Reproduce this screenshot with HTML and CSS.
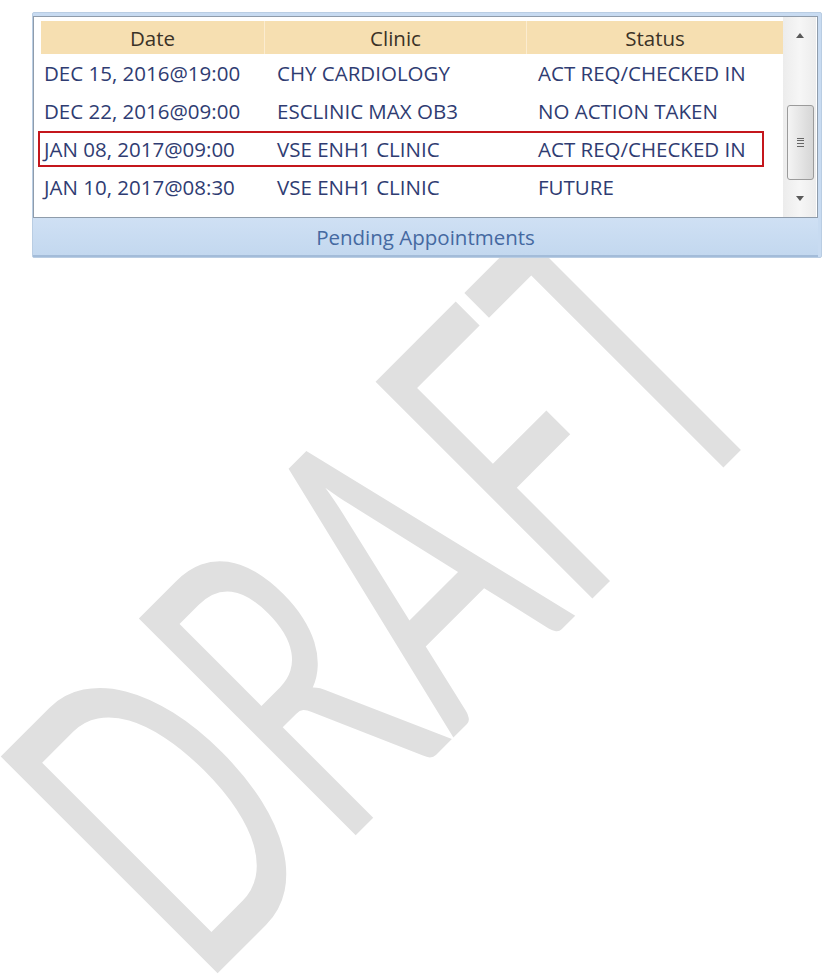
FILE: index.html
```html
<!DOCTYPE html>
<html lang="en">
<head>
  <meta charset="UTF-8" />
  <title>Pending Appointments</title>
  <link rel="stylesheet" href="styles.css">
</head>
<body>
  <div class="watermark">DRAFT</div>

  <section class="panel">
    <div class="grid-box">
      <div class="grid">
        <div class="row head">
          <div>Date</div>
          <div>Clinic</div>
          <div>Status</div>
        </div>
        <div class="row">
          <div>DEC 15, 2016@19:00</div>
          <div>CHY CARDIOLOGY</div>
          <div>ACT REQ/CHECKED IN</div>
        </div>
        <div class="row">
          <div>DEC 22, 2016@09:00</div>
          <div>ESCLINIC MAX OB3</div>
          <div>NO ACTION TAKEN</div>
        </div>
        <div class="row flagged">
          <div>JAN 08, 2017@09:00</div>
          <div>VSE ENH1 CLINIC</div>
          <div>ACT REQ/CHECKED IN</div>
        </div>
        <div class="row">
          <div>JAN 10, 2017@08:30</div>
          <div>VSE ENH1 CLINIC</div>
          <div>FUTURE</div>
        </div>
      </div>

      <!-- vertical scrollbar -->
      <div class="scrollbar">
        <span class="arrow up"></span>
        <div class="track">
          <div class="thumb"><span class="grip"></span></div>
        </div>
        <span class="arrow down"></span>
      </div>
    </div>
    <div class="panel-title">Pending Appointments</div>
  </section>
</body>
</html>
```

FILE: styles.css
```css
* { margin: 0; padding: 0; box-sizing: border-box; }
html, body {
  background: #fff;
  font-family: 'Open Sans', 'Noto Sans', sans-serif;
  overflow: hidden;
  height: 100%;
}

body {
  position: relative;
  padding-top: 12px;
}

/* watermark sits behind the panel, narrow letters on a 45deg baseline */
.watermark {
  position: absolute;
  left: -67px;
  top: 722px;
  transform-origin: 0 0;
  transform: rotate(-45deg) scaleX(0.6);
  font-family: 'Lato', sans-serif;
  font-weight: 400;
  font-size: 428px;
  line-height: 1;
  color: #e0e0e0;
  white-space: nowrap;
  z-index: 0;
}

.panel {
  position: relative;
  z-index: 1;
  width: 790px;
  margin-left: 32px;
  border: 1px solid #b9cde3;
  border-radius: 2px;
  background: #c8dbf1;
  padding: 3px 3px 0 0;
}

.grid-box {
  display: flex;
  height: 202px;
  background: #fff;
  border: 1px solid #8f9cab;
  padding: 4px 0 0 7px;
}

.grid {
  position: relative;
  width: 742px;
}

.row {
  position: relative;
  display: grid;
  grid-template-columns: 223px 262px 257px;
  height: 38px;
  align-items: center;
  font-size: 20.5px;
  color: #2f3c72;
}

.row div {
  padding-left: 3px;
  white-space: nowrap;
}

.row div:nth-child(2) { padding-left: 13px; }
.row div:nth-child(3) { padding-left: 12px; }

.row.head {
  height: 33px;
  background: #f6dfb1;
  color: #3b3227;
}

.row.head div {
  height: 100%;
  display: flex;
  align-items: center;
  justify-content: center;
  padding: 0;
}

.row.head div + div {
  border-left: 1px solid #fbecd0;
}

.row.flagged::after {
  content: '';
  position: absolute;
  left: -3px;
  right: 19px;
  top: 1px;
  bottom: 1px;
  border: 2px solid #c4161c;
}

/* scrollbar */
.scrollbar {
  width: 33px;
  display: flex;
  flex-direction: column;
  align-items: center;
  background: linear-gradient(to right, #ececec, #f6f6f6 50%, #ececec);
  margin-top: -4px;
  padding: 8px 0 6px;
}

.arrow {
  width: 0;
  height: 0;
  border-left: 4px solid transparent;
  border-right: 4px solid transparent;
}

.arrow.up { border-bottom: 5px solid #5a5a5a; margin-top: 8px; }
.arrow.down { border-top: 5px solid #5a5a5a; margin-bottom: 10px; }

.track {
  flex: 1;
  width: 100%;
  display: flex;
  flex-direction: column;
  justify-content: flex-end;
  padding: 0 2px 16px 4px;
}

.thumb {
  height: 75px;
  border: 1px solid #9b9b9b;
  border-radius: 3px;
  background: linear-gradient(to right, #f4f4f4, #e2e2e2 60%, #d6d6d6);
  display: flex;
  align-items: center;
  justify-content: center;
}

.grip {
  width: 7px;
  height: 9px;
  border-top: 1px solid #666;
  border-bottom: 1px solid #666;
  position: relative;
}

.grip::before,
.grip::after {
  content: '';
  position: absolute;
  left: 0;
  right: 0;
  border-top: 1px solid #666;
}

.grip::before { top: 1px; }
.grip::after { top: 4px; }

.panel-title {
  height: 39px;
  display: flex;
  align-items: center;
  justify-content: center;
  font-size: 20.5px;
  color: #4569a1;
  background: linear-gradient(#cfe0f4, #c3d8ef);
  border-bottom: 2px solid #a3bcd9;
}
```
